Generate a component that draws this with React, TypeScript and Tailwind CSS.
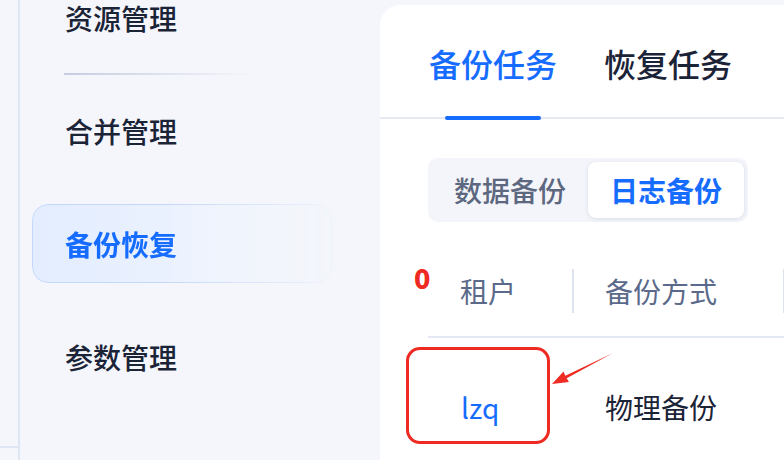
import React from "react";

const font = { fontFamily: '"Noto Sans CJK SC", "Noto Sans", sans-serif' };

const menu = [
  { label: "资源管理", active: false, divider: true },
  { label: "合并管理", active: false, divider: false },
  { label: "备份恢复", active: true, divider: false },
  { label: "参数管理", active: false, divider: false },
];

function Sidebar() {
  return (
    <div className="w-[360px] shrink-0 flex flex-col -mt-[22px]">
      {menu.map((item) => (
        <React.Fragment key={item.label}>
          <div
            className={
              item.active
                ? "ml-[12px] w-[300px] h-[79px] shrink-0 flex items-center pl-[32px] rounded-[16px] border border-[#c4d8fc] bg-gradient-to-r from-[#e3edff] to-[#f3f6fd] [mask-image:linear-gradient(to_right,black_45%,rgba(0,0,0,0.12))] text-[#166cff] font-bold"
                : "ml-[12px] w-[300px] h-[79px] shrink-0 flex items-center pl-[33px] text-[#1b2337] font-medium"
            }
          >
            <span className="text-[28px] leading-[32px]">{item.label}</span>
          </div>
          {item.divider ? (
            <div className="h-[34px] shrink-0 flex items-center">
              <div className="ml-[44px] w-[190px] h-[2px] bg-gradient-to-r from-[#c6cde0] to-[#f4f6fb]" />
            </div>
          ) : (
            <div className="h-[34px] shrink-0" />
          )}
        </React.Fragment>
      ))}
    </div>
  );
}

function Arrow() {
  return (
    <svg
      className="absolute left-[160px] top-[335px]"
      width="80"
      height="50"
      viewBox="0 0 80 50"
    >
      <polygon
        points="73,13 26.7,38.3 28.9,42.1 12,44 23.5,31.5 25.3,35.7"
        fill="#ee2c24"
      />
    </svg>
  );
}

function MainCard() {
  return (
    <div className="relative flex-1 mt-[5px] bg-white rounded-tl-[20px] flex flex-col">
      {/* tabs */}
      <div className="h-[114px] shrink-0 border-b-2 border-[#e6e9f4] flex items-end pl-[49px] gap-[47px]">
        <div className="flex flex-col items-center -mb-[3px]">
          <span className="text-[32px] leading-[32px] font-medium text-[#166cff] mb-[37px]">
            备份任务
          </span>
          <div className="w-[96px] h-[4px] rounded-full bg-[#166cff]" />
        </div>
        <div className="flex flex-col items-center -mb-[3px]">
          <span className="text-[32px] leading-[32px] font-medium text-[#1b2337] mb-[37px]">
            恢复任务
          </span>
          <div className="w-[96px] h-[4px]" />
        </div>
      </div>

      {/* segmented */}
      <div className="ml-[48px] mt-[39px] self-start flex p-[4px] rounded-[10px] bg-[#f3f5fa]">
        <div className="w-[156px] h-[56px] flex items-center justify-center text-[28px] font-medium text-[#5d6880]">
          数据备份
        </div>
        <div className="w-[156px] h-[56px] flex items-center justify-center rounded-[8px] bg-white shadow-[0_1px_4px_rgba(30,50,100,0.12)] text-[28px] font-bold text-[#166cff]">
          日志备份
        </div>
      </div>

      {/* table */}
      <div className="ml-[48px] mt-[24px] flex flex-col">
        <div className="relative h-[92px] border-b-2 border-[#e4e8f3] flex items-center">
          <span className="absolute -left-[14px] top-[18px] text-[27px] leading-none font-black text-[#ee2a22]">
            0
          </span>
          <div className="w-[144px] pl-[32px] text-[28px] text-[#5b6a8a]">租户</div>
          <div className="w-[2px] h-[44px] bg-[#dde3ef]" />
          <div className="w-[209px] pl-[31px] text-[28px] text-[#5b6a8a]">备份方式</div>
          <div className="w-[2px] h-[44px] bg-[#dde3ef]" />
        </div>
        <div className="flex items-center pt-[49px] leading-[40px]">
          <div className="w-[146px] pl-[33px] text-[28px] text-[#166cff]">lzq</div>
          <div className="w-[209px] pl-[31px] text-[28px] text-[#1b2337]">物理备份</div>
        </div>
      </div>

      {/* annotation */}
      <div className="absolute left-[26px] top-[342px] w-[144px] h-[97px] rounded-[14px] border-[3px] border-[#ee2a22]" />
      <Arrow />
    </div>
  );
}

export default function App() {
  return (
    <div
      className="w-[784px] h-[460px] overflow-hidden flex bg-[#f4f6fb]"
      style={font}
    >
      <div className="w-[20px] shrink-0 border-r-2 border-[#dfe6f3] flex flex-col">
        <div className="flex-1" />
        <div className="h-[2px] bg-[#dfe6f3] mb-[12px]" />
      </div>
      <Sidebar />
      <MainCard />
    </div>
  );
}
